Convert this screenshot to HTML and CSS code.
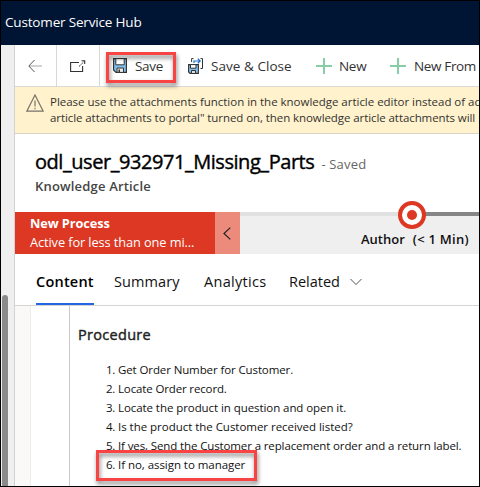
FILE: index.html
```
<!DOCTYPE html>
<html lang="en">
<head>
<meta charset="utf-8">
<title>Customer Service Hub</title>
<link rel="stylesheet" href="styles.css">
</head>
<body>
<div class="window">
  <header class="app-bar"><span class="app-name">Customer Service Hub</span></header>
  <div class="shell">
    <aside class="rail"><div class="scroll-thumb"></div></aside>
    <main class="page">
      <nav class="commands">
        <button class="cmd back"><svg width="14" height="14" viewBox="0 0 14 14" fill="none"><path d="M1 7H14" stroke="#b4b4b4" stroke-width="1.2"/><path d="M6.5 1L.8 7l5.7 6" stroke="#555" stroke-width="1"/></svg></button>
        <button class="cmd popout"><svg width="16" height="12" viewBox="0 0 16 12" fill="none" stroke="#333"><path d="M9 2.5H.6v9h12V6" stroke-width="1.1"/><path d="M9 6.5l5.4-5.3" stroke-dasharray="1.6 .6"/><path d="M11.5.8h3.2V4" stroke-width="1.1"/></svg></button>
        <button class="cmd save"><svg width="14" height="15" viewBox="0 0 14 15"><path d="M.6.6h12.8v13.8H3L.6 12z" fill="#83bfec" stroke="#333" stroke-width="1.2"/><path d="M2.8.6h8.4v6.2H2.8z" fill="#fff" stroke="#333"/><path d="M4 10h6.500v4.400H4z" fill="#e8e8e8" stroke="#333"/><path d="M5.500 11.500h1.500v3H5.500z" fill="#333"/></svg><span>Save</span><i class="mark mark-save"></i></button>
        <button class="cmd save-close"><svg width="16" height="16" viewBox="0 0 16 16" fill="none"><path d="M.6 6.600h9.800v8.800H2L.6 14z" fill="#83bfec" stroke="#333" stroke-width="1.100"/><path d="M2.500 6.600h5.500v3.600H2.500z" fill="#fff" stroke="#333"/><path d="M3.500 12.500h4v3h-4z" fill="#ddd" stroke="#333"/><path d="M5.500.6H3.600V4M12.500.6h2v9.900h-2" stroke="#333"/><path d="M6 5V3h6M9.800.6L12.200 3 9.800 5.300" stroke="#1b6fc0" stroke-width="1.200"/></svg><span>Save &amp; Close</span></button>
        <button class="cmd new"><svg class="plus" width="16" height="16" viewBox="0 0 16 16"><path d="M8 0v16M0 8h16"/></svg><span>New</span></button>
        <button class="cmd new-from"><svg class="plus" width="16" height="16" viewBox="0 0 16 16"><path d="M8 0v16M0 8h16"/></svg><span>New From</span></button>
      </nav>
      <section class="notice">
        <svg width="18" height="18" viewBox="0 0 18 18" fill="none" stroke="#77736a"><path d="M9 1L17.200 17.200H.8z" stroke-width="1.200"/><path d="M9 6.500v6M9 13.800v1.500" stroke-width="1.200"/></svg>
        <div><p class="notice-one">Please use the attachments function in the knowledge article editor instead of ac</p><p class="notice-two">article attachments to portal" turned on, then knowledge article attachments will</p></div>
      </section>
      <section class="record">
        <div class="record-line"><h1>odl_user_932971_Missing_Parts</h1><span class="state">- Saved</span></div>
        <div class="entity">Knowledge Article</div>
      </section>
      <section class="process">
        <div class="process-name"><b>New Process</b><span>Active for less than one mi...</span></div>
        <div class="collapse"><svg width="8" height="13" viewBox="0 0 8 13" fill="none" stroke="#222" stroke-width="1.200"><path d="M7.300.6L1 6.500l6.300 5.900"/></svg></div>
        <div class="track">
          <div class="line"></div><div class="line-next"></div>
          <svg class="stage-dot" width="28" height="28" viewBox="0 0 28 28"><circle cx="14" cy="14" r="12" fill="#fff" stroke="#dc3823" stroke-width="4"/><circle cx="14" cy="14" r="5" fill="#dc3823"/></svg>
          <div class="stage"><span class="stage-name">Author</span><span class="stage-time">(&lt; 1 Min)</span></div>
        </div>
      </section>
      <nav class="tabs">
        <span class="tab active">Content</span><span class="tab summary">Summary</span><span class="tab analytics">Analytics</span><span class="tab related">Related</span>
        <svg width="12" height="8" viewBox="0 0 12 8" fill="none" stroke="#555"><path d="M.5 1L6 6.500 11.500 1"/></svg>
      </nav>
      <section class="body">
        <div class="gutter"></div>
        <article class="article">
          <h2>Procedure</h2>
          <ol>
            <li><em>1.</em><span class="s1">Get Order Number for Customer.</span></li>
            <li><em>2.</em><span class="s2">Locate Order record.</span></li>
            <li><em>3.</em><span class="s3">Locate the product in question and open it.</span></li>
            <li><em>4.</em><span class="s4">Is the product the Customer received listed?</span></li>
            <li><em>5.</em><span class="s5">If yes, Send the Customer a replacement order and a return label.</span></li>
            <li><em>6.</em><span class="s6">If no, assign to manager</span><i class="mark mark-step"></i></li>
          </ol>
        </article>
      </section>
    </main>
  </div>
</div>
</body>
</html>
```
FILE: styles.css
```
* { box-sizing: border-box; margin: 0; padding: 0; }
body { width: 480px; height: 487px; overflow: hidden; font-family: "Open Sans", sans-serif; color: #333; }
svg { display: block; flex: none; }
.window { display: flex; flex-direction: column; width: 480px; height: 487px; border: 1px solid #000; overflow: hidden; background: #fff; white-space: nowrap; }
.app-bar { height: 44px; flex: none; background: #001433; color: #fff; padding: 11px 0 0 4px; }
.app-name { display: block; font-size: 13.5px; line-height: 20px; letter-spacing: -.17px; }
.shell { display: flex; flex: 1; min-height: 0; }
.rail { width: 14px; flex: none; background: #efefef; border-right: 1px solid #d2d2d2; padding: 250px 0 0 1px; }
.scroll-thumb { width: 6px; height: 191px; background: #8a8a8a; border-radius: 3px 3px 0 0; }
.page { flex: 1; min-width: 0; overflow: hidden; }

.commands { display: flex; height: 42px; border-bottom: 1px solid #d8d8d8; }
.cmd { display: flex; align-items: center; flex: none; position: relative; border: 0; background: none; font: 13.5px/20px "Open Sans", sans-serif; color: #333; }
.back { width: 42px; padding-left: 13px; border-right: 1px solid #d8d8d8; }
.popout { width: 43px; padding-left: 13px; border-right: 1px solid #d8d8d8; }
.save { width: 74px; padding-left: 13px; gap: 8px; letter-spacing: -.3px; }
.save-close { width: 142px; padding-left: 14px; gap: 7px; letter-spacing: .05px; }
.new { width: 74px; gap: 7px; letter-spacing: -.3px; }
.new-from { gap: 8px; letter-spacing: -.35px; }
.plus { stroke: #87cda5; stroke-width: 2; }
.mark { position: absolute; border: 3px solid #f94444; filter: drop-shadow(1px 3px 2px rgba(0,0,0,.5)); }
.mark-save { left: 6px; top: 7px; width: 70px; height: 31px; }

.notice { display: flex; height: 47px; background: #fff2cc; border-bottom: 1px solid #d8d4c8; padding: 7px 0 0 11px; gap: 6px; }
.notice p { font-size: 11.5px; line-height: 16px; }
.notice-one { letter-spacing: -.02px; }
.notice-two { letter-spacing: -.08px; }

.record { height: 78px; padding: 13px 0 0 20px; }
.record-line { display: flex; align-items: baseline; gap: 7px; }
h1 { font-size: 20px; line-height: 30px; font-weight: 400; color: #000; letter-spacing: -.45px; -webkit-text-stroke: .4px #000; }
.state { font-size: 13px; color: #666; letter-spacing: .18px; }
.entity { font-size: 13px; line-height: 18px; font-weight: 600; color: #444; letter-spacing: .18px; }

.process { display: flex; height: 42px; background: #efefef; }
.process-name { width: 200px; background: #dc3823; color: #fff; padding: 2px 0 0 15px; font-size: 12.8px; line-height: 19px; }
.process-name b, .process-name span { display: block; }
.process-name b { letter-spacing: -.1px; }
.process-name span { letter-spacing: -.1px; }
.collapse { width: 25px; background: #ec8a7c; padding: 15px 0 0 8px; }
.track { flex: 1; position: relative; }
.line { height: 4px; background: #e1e1e1; }
.line-next { position: absolute; left: 172px; right: 0; top: 0; height: 4px; background: #868686; }
.stage-dot { position: absolute; left: 158px; top: -11px; }
.stage { display: flex; gap: 8px; padding: 13px 0 0 121px; font-size: 13px; line-height: 20px; font-weight: 600; color: #111; }
.stage-time { letter-spacing: .25px; }

.tabs { display: flex; height: 52px; border-bottom: 1px solid #d4d4d4; padding-left: 21px; font-size: 14.5px; color: #111; }
.tab { height: 51px; padding-top: 18px; line-height: 20px; }
.active { width: 58px; font-weight: 600; color: #000; border-bottom: 2px solid #2266e3; letter-spacing: .22px; margin-right: 20px; }
.summary { width: 90px; letter-spacing: .1px; }
.analytics { width: 85px; letter-spacing: .3px; }
.related { width: 61px; }
.tabs svg { margin-top: 24px; }

.body { display: flex; height: 181px; }
.gutter { width: 16px; background: #faf9f8; border-right: 1px solid #eeedec; }
.article { flex: 1; margin-left: 38px; border-left: 1px solid #c8c8c8; padding: 18px 0 0 8px; color: #111; }
h2 { font-size: 14.5px; line-height: 22px; font-weight: 400; color: #222; letter-spacing: .3px; -webkit-text-stroke: .4px #222; }
ol { list-style: none; padding: 14px 0 0 28px; }
li { display: flex; position: relative; height: 19px; font-size: 11.5px; line-height: 19px; }
em { width: 12px; flex: none; font-style: normal; letter-spacing: -.3px; }
.s1 { letter-spacing: -.11px; }
.s2 { letter-spacing: -.14px; }
.s3 { letter-spacing: -.07px; }
.s4 { letter-spacing: -.03px; }
.s5 { letter-spacing: -.12px; }
.s6 { letter-spacing: -.05px; }
.mark-step { left: -10px; top: -5px; width: 161px; height: 31px; }
```
